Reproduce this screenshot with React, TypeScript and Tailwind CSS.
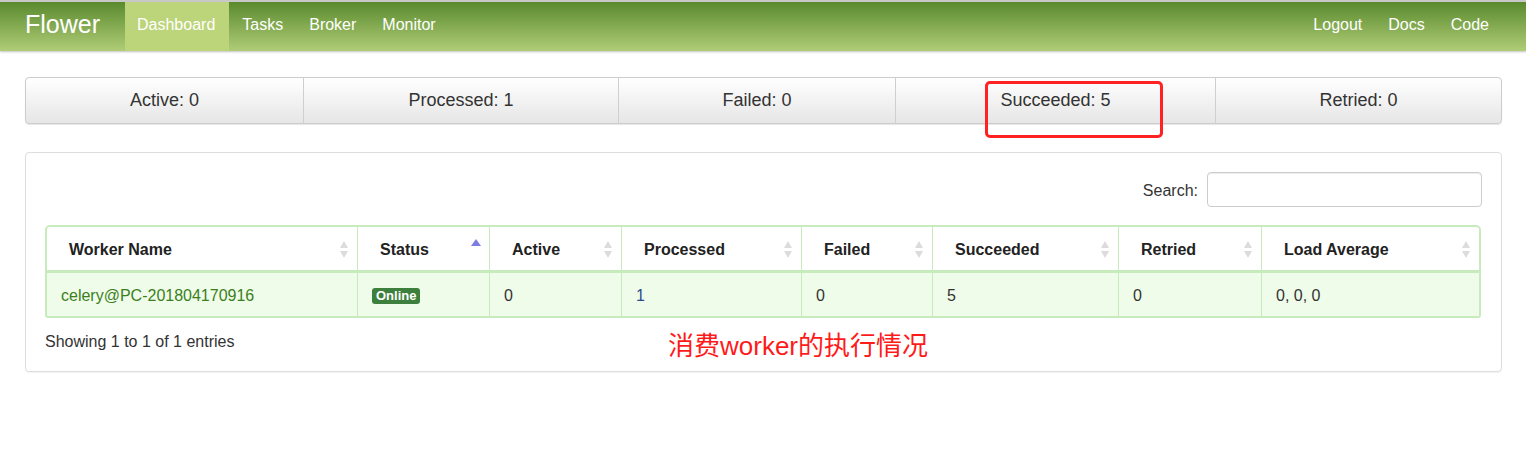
import React from "react"

const font = { fontFamily: '"Liberation Sans", Arial, sans-serif' }

const stats = [
  { label: "Active: 0", w: "w-[277px]" },
  { label: "Processed: 1", w: "w-[315px]" },
  { label: "Failed: 0", w: "w-[277px]" },
  { label: "Succeeded: 5", w: "w-[320px]" },
  { label: "Retried: 0", w: "flex-1" },
]

const cols = [
  { name: "Worker Name", w: "w-[310px]" },
  { name: "Status", w: "w-[132px]", sorted: true },
  { name: "Active", w: "w-[132px]" },
  { name: "Processed", w: "w-[180px]" },
  { name: "Failed", w: "w-[131px]" },
  { name: "Succeeded", w: "w-[186px]" },
  { name: "Retried", w: "w-[143px]" },
  { name: "Load Average", w: "flex-1" },
]

const SortIcon = ({ sorted }: { sorted?: boolean }) =>
  sorted ? (
    <svg width="12" height="20" viewBox="0 0 12 20" className="absolute right-[7px] top-[8px]">
      <polygon points="6,4 11,11 1,11" fill="#7d7de0" />
    </svg>
  ) : (
    <svg width="12" height="20" viewBox="0 0 12 20" className="absolute right-[7px] top-[13px]">
      <polygon points="6,1 10,8 2,8" fill="#dcdcdc" />
      <polygon points="6,18 10,11 2,11" fill="#dcdcdc" />
    </svg>
  )

const Navbar = () => (
  <div className="h-[51px] border-t-2 border-[#c8c8c8] bg-gradient-to-b from-[#5a8a2e] to-[#b0cd76] shadow-[0_1px_2px_rgba(0,0,0,0.25)] flex items-stretch pl-[25px] pr-[24px]">
    <div className="text-[25px] text-white flex items-center pr-[25px] pb-[3px]">Flower</div>
    <div className="flex items-stretch text-[16px] text-white">
      <div className="bg-[#bcd47a] pl-[12px] pr-[14px] flex items-center pb-[4px]">Dashboard</div>
      <div className="px-[13px] flex items-center pb-[4px]">Tasks</div>
      <div className="px-[13px] flex items-center pb-[4px]">Broker</div>
      <div className="px-[13px] flex items-center pb-[4px]">Monitor</div>
    </div>
    <div className="ml-auto flex items-stretch text-[16px] text-white">
      <div className="px-[13px] flex items-center pb-[4px]">Logout</div>
      <div className="px-[13px] flex items-center pb-[4px]">Docs</div>
      <div className="px-[13px] flex items-center pb-[4px]">Code</div>
    </div>
  </div>
)

export default function App() {
  return (
    <div className="relative min-h-[458px] bg-white text-[#333]" style={font}>
      <Navbar />

      <div className="pl-[25px] pr-[24px] pt-[26px]">
        <div className="flex h-[47px] border border-[#cccccc] rounded-[4px] bg-gradient-to-b from-white to-[#e6e6e6] shadow-[0_1px_1px_rgba(0,0,0,0.1)] text-[18px]">
          {stats.map((s, i) => (
            <div
              key={s.label}
              className={`${s.w} flex items-center justify-center ${i > 0 ? "border-l border-[#cfcfcf]" : ""}`}
            >
              {s.label}
            </div>
          ))}
        </div>

        <div className="mt-[28px] border border-[#dddddd] rounded-[4px] shadow-[0_1px_1px_rgba(0,0,0,0.05)] px-[19px] pt-[19px] pb-[20px]">
          <div className="flex justify-end items-end gap-[9px]">
            <span className="text-[16px] pb-[4px]">Search:</span>
            <div className="w-[275px] h-[35px] border border-[#cccccc] rounded-[4px] shadow-[inset_0_1px_1px_rgba(0,0,0,0.075)]" />
          </div>

          <div className="mt-[18px] w-[1436px]">
            <div className="flex h-[48px] border-2 border-[#c8ebbd] border-b-[3px] rounded-t-[5px] bg-white font-bold text-[16px] text-[#222]">
              {cols.map((c, i) => (
                <div
                  key={c.name}
                  className={`${c.w} relative flex items-center pl-[22px] pt-[2px] ${i > 0 ? "border-l border-[#c8ebbd]" : ""}`}
                >
                  {c.name}
                  <SortIcon sorted={c.sorted} />
                </div>
              ))}
            </div>
            <div className="flex h-[45px] bg-[#effce9] border-x-2 border-b-2 border-[#c8ebbd] rounded-b-[3px] text-[16px]">
              {cols.map((c, i) => (
                <div
                  key={c.name}
                  className={`${c.w} flex items-center pl-[14px] pt-[2px] ${i > 0 ? "border-l border-[#c8ebbd]" : ""}`}
                >
                  {i === 0 && <span className="text-[#3c7f1c]">celery@PC-201804170916</span>}
                  {i === 1 && (
                    <span className="bg-[#3d7f3d] text-white font-bold text-[13px] leading-[16px] px-[4px] rounded-[3px]">
                      Online
                    </span>
                  )}
                  {i === 2 && "0"}
                  {i === 3 && <span className="text-[#2a4a8a]">1</span>}
                  {i === 4 && "0"}
                  {i === 5 && "5"}
                  {i === 6 && "0"}
                  {i === 7 && "0, 0, 0"}
                </div>
              ))}
            </div>
          </div>

          <div className="mt-[15px] text-[16px] h-[18px] leading-[18px]">Showing 1 to 1 of 1 entries</div>
        </div>
      </div>

      <div className="absolute left-[985px] top-[81px] w-[178px] h-[57px] border-[3px] border-[#ff2222] rounded-[5px]" />
      <div
        className="absolute left-[668px] top-[329px] text-[26px] leading-[34px] text-[#ff1a1a]"
        style={{ fontFamily: '"Liberation Sans", "Noto Sans CJK SC", sans-serif' }}
      >
        消费worker的执行情况
      </div>
    </div>
  )
}
